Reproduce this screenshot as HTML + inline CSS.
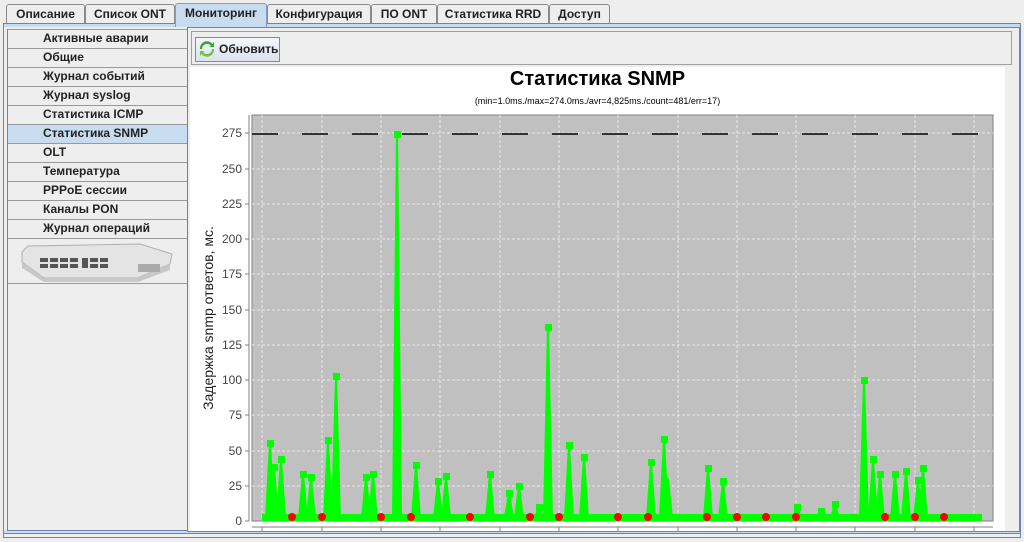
<!DOCTYPE html>
<html><head><meta charset="utf-8"><style>
*{margin:0;padding:0;box-sizing:border-box}
body{width:1024px;height:542px;background:#eeeeee;font-family:"Liberation Sans",sans-serif;position:relative;overflow:hidden}
.a{position:absolute}
.tab{position:absolute;top:4px;height:19px;border:1px solid #8a8a8a;border-bottom:none;background:#eeeeee;font-size:12px;font-weight:bold;color:#222;text-align:center;line-height:18px;border-radius:3px 3px 0 0}
.it{position:absolute;left:8px;width:180px;height:19px;border-top:1px solid #999;font-size:12px;font-weight:bold;color:#222;padding-left:35px;line-height:17px;background:#eeeeee}
</style></head><body>
<div class="tab" style="left:6px;width:79px">Описание</div>
<div class="tab" style="left:85px;width:90px">Список ONT</div>
<div class="tab" style="left:371px;width:66px">ПО ONT</div>
<div class="tab" style="left:437px;width:112px">Статистика RRD</div>
<div class="tab" style="left:549px;width:61px">Доступ</div>
<div class="tab" style="left:267px;width:104px">Конфигурация</div>
<div class="a" style="left:3px;top:23px;width:1018px;height:515px;border:1px solid #6d84b0;background:#eeeeee"></div>
<div class="a" style="left:4px;top:24px;width:1016px;height:3px;background:#c8dcf0"></div>
<div class="tab" style="left:175px;top:3px;width:92px;height:24px;background:#c8dcf0;border-color:#8a9ab8">Мониторинг</div>
<div class="a" style="left:4px;top:530px;width:1016px;height:4px;background:#c8dcf0;border-bottom:1px solid #6d84b0"></div>
<div class="a" style="left:7px;top:29px;width:181px;height:502px;border:1px solid #6d84b0;border-top:none;border-right:none"></div>
<div class="it" style="top:29px">Активные аварии</div>
<div class="it" style="top:48px">Общие</div>
<div class="it" style="top:67px">Журнал событий</div>
<div class="it" style="top:86px">Журнал syslog</div>
<div class="it" style="top:105px">Статистика ICMP</div>
<div class="it" style="top:124px;background:#c8dcf0">Статистика SNMP</div>
<div class="it" style="top:143px">OLT</div>
<div class="it" style="top:162px">Температура</div>
<div class="it" style="top:181px">PPPoE сессии</div>
<div class="it" style="top:200px">Каналы PON</div>
<div class="it" style="top:219px">Журнал операций</div>
<div class="it" style="top:238px;height:46px;border-bottom:1px solid #999"></div>
<svg class="a" style="left:20px;top:242px" width="155" height="40"><polygon points="2,10 8,4 120,2 152,12 150,22 118,36 24,36 2,20" fill="#e4e4e4" stroke="#b0b0b0"/><polygon points="2,20 24,36 118,36 150,22 150,28 118,40 24,40 2,26" fill="#c8c8c8"/><g fill="#555"><rect x="20" y="16" width="8" height="4"/><rect x="30" y="16" width="8" height="4"/><rect x="40" y="16" width="8" height="4"/><rect x="50" y="16" width="8" height="4"/><rect x="20" y="22" width="8" height="4"/><rect x="30" y="22" width="8" height="4"/><rect x="40" y="22" width="8" height="4"/><rect x="50" y="22" width="8" height="4"/><rect x="62" y="16" width="6" height="10"/><rect x="70" y="16" width="8" height="4"/><rect x="80" y="16" width="8" height="4"/><rect x="70" y="22" width="8" height="4"/><rect x="80" y="22" width="8" height="4"/></g><rect x="118" y="22" width="22" height="8" fill="#aaa"/></svg>
<div class="a" style="left:187px;top:27px;width:833px;height:505px;border:1px solid #6d84b0;background:#eeeeee"></div>
<div class="a" style="left:191px;top:31px;width:821px;height:34px;border:1px solid #a0a0a0"></div>
<div class="a" style="left:195px;top:37px;width:85px;height:25px;border:1px solid #7a8aa8;background:linear-gradient(#f4f6fa,#dde3ec);font-size:12px;font-weight:bold;line-height:23px;padding-left:23px;color:#222">Обновить</div>
<svg class="a" style="left:199px;top:41px" width="16" height="16"><path d="M3 8a5 5 0 0 1 9-3l-2 1h5V1l-1.5 2A7 7 0 0 0 1 8z" fill="#3aa52e"/><path d="M13 8a5 5 0 0 1-9 3l2-1H1v5l1.5-2A7 7 0 0 0 15 8z" fill="#6cc24a"/></svg>
<div class="a" style="left:190px;top:67px;width:815px;height:464px;background:#fff"></div>
<div class="a" style="left:190px;top:68px;width:815px;text-align:center;font-size:20px;font-weight:bold;color:#000">Статистика SNMP</div>
<div class="a" style="left:190px;top:96px;width:815px;text-align:center;font-size:9px;color:#000">(min=1.0ms./max=274.0ms./avr=4,825ms./count=481/err=17)</div>
<div class="a" style="left:208px;top:318px;transform:translate(-50%,-50%) rotate(-90deg);font-size:14px;white-space:nowrap;color:#222">Задержка snmp ответов, мс.</div>
<svg class="a" style="left:0;top:0" width="1024" height="542" font-family="Liberation Sans" font-size="12" fill="#444">
<rect x="252" y="115" width="741" height="406" fill="#c0c0c0" stroke="#808080"/>
<g stroke="#e8e8e8" stroke-dasharray="3,2" stroke-width="1">
<path d="M262 115V521M322 115V521M381 115V521M440 115V521M500 115V521M559 115V521M618 115V521M678 115V521M737 115V521M796 115V521M855 115V521M915 115V521M974 115V521"/>
<path d="M252 133H993M252 169H993M252 204H993M252 239H993M252 274H993M252 310H993M252 345H993M252 380H993M252 415H993M252 451H993M252 486H993"/>
</g>
<path d="M249 115V521M245 133H249M245 169H249M245 204H249M245 239H249M245 274H249M245 310H249M245 345H249M245 380H249M245 415H249M245 451H249M245 486H249M245 521H249M252 527H993M262 527V531M322 527V531M381 527V531M440 527V531M500 527V531M559 527V531M618 527V531M678 527V531M737 527V531M796 527V531M855 527V531M915 527V531M974 527V531" stroke="#808080"/>
<g text-anchor="end"><text x="242" y="137">275</text><text x="242" y="173">250</text><text x="242" y="208">225</text><text x="242" y="243">200</text><text x="242" y="278">175</text><text x="242" y="314">150</text><text x="242" y="349">125</text><text x="242" y="384">100</text><text x="242" y="419">75</text><text x="242" y="455">50</text><text x="242" y="490">25</text><text x="242" y="525">0</text></g>
<path d="M252 134H993" stroke="#333" stroke-width="2" stroke-dasharray="26,24"/>
<rect x="262" y="514" width="720" height="7" fill="#00ff00"/>
<g fill="#00ff00" stroke="#00ff00" stroke-width="2" stroke-linejoin="round">
<path d="M266 518L270 443L274 518Z"/><path d="M271 518L274 467L278 518Z"/><path d="M277 518L281 459L285 518Z"/><path d="M299 518L303 474L307 518Z"/><path d="M307 518L311 477L315 518Z"/><path d="M324 518L328 440L332 518Z"/><path d="M332 518L336 376L340 518Z"/><path d="M362 518L366 477L370 518Z"/><path d="M369 518L373 474L377 518Z"/><path d="M393 518L397 134L401 518Z"/><path d="M412 518L416 465L420 518Z"/><path d="M434 518L438 481L442 518Z"/><path d="M442 518L446 476L450 518Z"/><path d="M486 518L490 474L494 518Z"/><path d="M505 518L509 493L513 518Z"/><path d="M515 518L519 486L523 518Z"/><path d="M535 518L539 507L543 518Z"/><path d="M544 518L548 327L552 518Z"/><path d="M565 518L569 445L573 518Z"/><path d="M580 518L584 457L588 518Z"/><path d="M647 518L651 462L655 518Z"/><path d="M660 518L664 439L668 518Z"/><path d="M664 518L668 479L672 518Z"/><path d="M704 518L708 468L712 518Z"/><path d="M719 518L723 481L727 518Z"/><path d="M793 518L797 507L801 518Z"/><path d="M817 518L821 511L825 518Z"/><path d="M831 518L835 504L839 518Z"/><path d="M860 518L864 380L868 518Z"/><path d="M869 518L873 459L877 518Z"/><path d="M876 518L880 474L884 518Z"/><path d="M891 518L895 474L899 518Z"/><path d="M902 518L906 471L910 518Z"/><path d="M914 518L918 480L922 518Z"/><path d="M919 518L923 468L927 518Z"/>
</g>
<g fill="#00ff00">
<rect x="267" y="440" width="7" height="7"/><rect x="271" y="464" width="7" height="7"/><rect x="278" y="456" width="7" height="7"/><rect x="300" y="471" width="7" height="7"/><rect x="308" y="474" width="7" height="7"/><rect x="325" y="437" width="7" height="7"/><rect x="333" y="373" width="7" height="7"/><rect x="363" y="474" width="7" height="7"/><rect x="370" y="471" width="7" height="7"/><rect x="394" y="131" width="7" height="7"/><rect x="413" y="462" width="7" height="7"/><rect x="435" y="478" width="7" height="7"/><rect x="443" y="473" width="7" height="7"/><rect x="487" y="471" width="7" height="7"/><rect x="506" y="490" width="7" height="7"/><rect x="516" y="483" width="7" height="7"/><rect x="536" y="504" width="7" height="7"/><rect x="545" y="324" width="7" height="7"/><rect x="566" y="442" width="7" height="7"/><rect x="581" y="454" width="7" height="7"/><rect x="648" y="459" width="7" height="7"/><rect x="661" y="436" width="7" height="7"/><rect x="705" y="465" width="7" height="7"/><rect x="720" y="478" width="7" height="7"/><rect x="794" y="504" width="7" height="7"/><rect x="818" y="508" width="7" height="7"/><rect x="832" y="501" width="7" height="7"/><rect x="861" y="377" width="7" height="7"/><rect x="870" y="456" width="7" height="7"/><rect x="877" y="471" width="7" height="7"/><rect x="892" y="471" width="7" height="7"/><rect x="903" y="468" width="7" height="7"/><rect x="915" y="477" width="7" height="7"/><rect x="920" y="465" width="7" height="7"/>
</g>
<g fill="#ff0000">
<circle cx="292" cy="517" r="4"/><circle cx="322" cy="517" r="4"/><circle cx="381" cy="517" r="4"/><circle cx="411" cy="517" r="4"/><circle cx="470" cy="517" r="4"/><circle cx="530" cy="517" r="4"/><circle cx="559" cy="517" r="4"/><circle cx="618" cy="517" r="4"/><circle cx="648" cy="517" r="4"/><circle cx="707" cy="517" r="4"/><circle cx="737" cy="517" r="4"/><circle cx="766" cy="517" r="4"/><circle cx="796" cy="517" r="4"/><circle cx="885" cy="517" r="4"/><circle cx="915" cy="517" r="4"/><circle cx="944" cy="517" r="4"/>
</g>
</svg>
</body></html>
